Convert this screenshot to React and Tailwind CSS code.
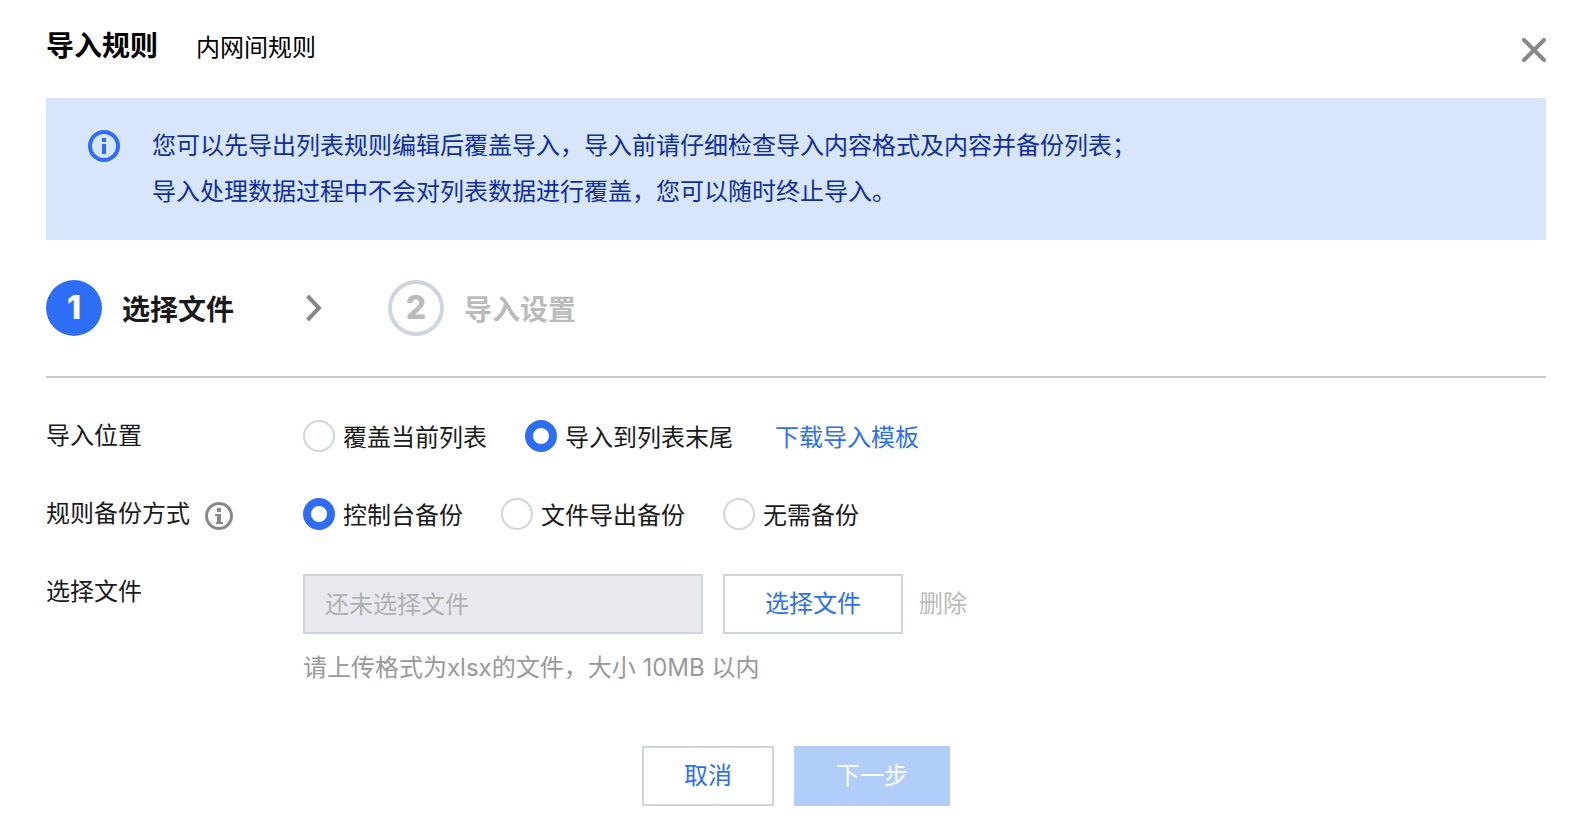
import React, { useState } from 'react';

const CloseIcon = () => (
  <svg className="block" width="24" height="24" viewBox="0 0 24 24" fill="none">
    <path d="M2 2L22 22M22 2L2 22" stroke="#888888" strokeWidth="4" strokeLinecap="round" />
  </svg>
);

const NoticeIcon = () => (
  <svg className="block" width="32" height="32" viewBox="0 0 32 32" fill="none">
    <circle cx="16" cy="16" r="14" stroke="#2e6ef7" strokeWidth="4" />
    <path d="M14 8h4v4h-4zM14 14h4v10h-4z" fill="#2e6ef7" />
  </svg>
);

const HelpIcon = () => (
  <svg className="block" width="28" height="28" viewBox="0 0 28 28" fill="none">
    <circle cx="14" cy="14" r="12.5" stroke="#888888" strokeWidth="3" />
    <path d="M12 6h4v4h-4zM10 12h6v8h2v2h-7v-2h1v-6h-2z" fill="#888888" />
  </svg>
);

const StepArrow = () => (
  <svg className="block" width="16" height="32" viewBox="0 0 16 32" fill="none">
    <path d="M1.5 4L13 16L1.5 28" stroke="#888888" strokeWidth="4" />
  </svg>
);

const RadioOption = ({ name, label, checked, onChange }) => (
  <label className="flex items-center gap-2">
    <input
      type="radio"
      name={name}
      checked={checked}
      onChange={onChange}
      className="h-8 w-8 shrink-0 appearance-none rounded-full border-2 border-[#cfd5de] bg-white checked:border-8 checked:border-[#2e6ef7]"
    />
    <span className="pt-1 leading-8">{label}</span>
  </label>
);

const positions = ['覆盖当前列表', '导入到列表末尾'];
const backups = ['控制台备份', '文件导出备份', '无需备份'];

const App = () => {
  const [position, setPosition] = useState(1);
  const [backup, setBackup] = useState(0);

  return (
    <div className="bg-white pt-6 pr-12 pb-3 pl-[46px] font-['Inter','Noto_Sans_CJK_SC',sans-serif] text-2xl leading-9 text-[#1a1a1a]">
      {/* Header */}
      <header className="flex items-center justify-between pb-[30px] text-black">
        <div className="flex items-center gap-[38px]">
          <h1 className="text-[28px] leading-11 font-bold">导入规则</h1>
          <span className="pt-1">内网间规则</span>
        </div>
        <button type="button" aria-label="关闭" className="mt-2">
          <CloseIcon />
        </button>
      </header>

      {/* Notice */}
      <div className="flex gap-8 bg-[#d7e5fd] px-[42px] py-[25px] text-[#0f2f9f]">
        <div className="mt-[7px]">
          <NoticeIcon />
        </div>
        <p className="leading-[46px]">
          您可以先导出列表规则编辑后覆盖导入，导入前请仔细检查导入内容格式及内容并备份列表；
          <br />
          导入处理数据过程中不会对列表数据进行覆盖，您可以随时终止导入。
        </p>
      </div>

      {/* Steps */}
      <ol className="flex items-center border-b-2 border-[#cccccc] py-10 text-[28px] font-bold">
        <li className="flex items-center gap-5">
          <span className="flex h-14 w-14 items-center justify-center rounded-full bg-[#2e6ef7] text-[32px] font-extrabold text-white">1</span>
          <span className="pt-1">选择文件</span>
        </li>
        <li className="mr-[66px] ml-[72px]" aria-hidden="true">
          <StepArrow />
        </li>
        <li className="flex items-center gap-5 text-[#bbbbbb]">
          <span className="flex h-14 w-14 items-center justify-center rounded-full border-4 border-[#cfd5de] text-[32px] font-extrabold">2</span>
          <span className="pt-1">导入设置</span>
        </li>
      </ol>

      {/* Form */}
      <form className="pt-10" onSubmit={(e) => e.preventDefault()}>
        <div className="grid grid-cols-[257px_1fr] gap-y-[42px]">
          <div>导入位置</div>
          <div className="flex items-center gap-[38px]">
            {positions.map((label, i) => (
              <RadioOption key={label} name="position" label={label} checked={position === i} onChange={() => setPosition(i)} />
            ))}
            <a href="#template" className="pt-1 pl-1 leading-8 text-[#2e6ef7]">下载导入模板</a>
          </div>

          <div className="flex items-center gap-[15px]">
            <span>规则备份方式</span>
            <span className="pt-1">
              <HelpIcon />
            </span>
          </div>
          <div className="flex items-center gap-[38px]">
            {backups.map((label, i) => (
              <RadioOption key={label} name="backup" label={label} checked={backup === i} onChange={() => setBackup(i)} />
            ))}
          </div>

          <label htmlFor="file">选择文件</label>
          <div>
            <div className="flex items-center">
              <input
                id="file"
                type="text"
                disabled
                placeholder="还未选择文件"
                className="h-15 w-[400px] border-2 border-[#cfd5de] bg-[#e8e9ee] px-5 placeholder:text-[#b0b0b2]"
              />
              <button type="button" className="ml-5 h-15 border-2 border-[#cfd5de] px-10 text-[#2e6ef7]">选择文件</button>
              <button type="button" disabled className="ml-4 text-[#bbbbbb]">删除</button>
            </div>
            <p className="mt-4 text-[#999999]">请上传格式为xlsx的文件，大小 10MB 以内</p>
          </div>
        </div>

        {/* Footer */}
        <div className="mt-15 flex justify-center gap-5">
          <button type="button" className="h-15 border-2 border-[#cfd5de] px-10 text-[#2e6ef7]">取消</button>
          <button type="submit" disabled className="h-15 border-2 border-[#b1cdf9] bg-[#b1cdf9] px-10 text-white">下一步</button>
        </div>
      </form>
    </div>
  );
};

export default App;
